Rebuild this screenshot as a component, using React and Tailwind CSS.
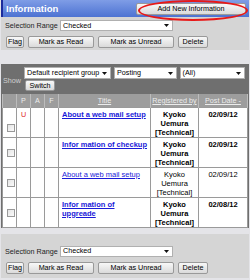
const Arrow = () => (
  <svg width="5" height="3" viewBox="0 0 5 3" className="shrink-0">
    <path d="M0 0h5L2.5 3z" fill="#111" />
  </svg>
);

function Select({ className, children }) {
  return (
    <div className={'flex items-center justify-between bg-white border border-[#b0b0b0] pl-[2px] pr-[3px] ' + className}>
      <span className="leading-none whitespace-nowrap">{children}</span>
      <Arrow />
    </div>
  );
}

function Btn({ className, children }) {
  return (
    <button className={'flex items-center justify-center border border-[#999] rounded-[2px] bg-linear-to-b from-[#f8f8f8] to-[#dadada] leading-none text-black whitespace-nowrap ' + className}>
      {children}
    </button>
  );
}

function ActionPanel({ className }) {
  return (
    <div className={'bg-[#d5d5d5] pl-[4px] ' + className}>
      <div className="flex items-center h-[11px]">
        <span className="w-[55px] shrink-0 text-[#222] whitespace-nowrap">Selection Range</span>
        <Select className="w-[113px] h-[11px]">Checked</Select>
      </div>
      <div className="flex gap-[4px] h-[12px] mt-[5px] pl-[1px]">
        <Btn className="w-[18px]">Flag</Btn>
        <Btn className="w-[66px]">Mark as Read</Btn>
        <Btn className="w-[76px]">Mark as Unread</Btn>
        <Btn className="w-[30px]">Delete</Btn>
      </div>
    </div>
  );
}

const rows = [
  { unread: true, title: 'About a web mail setup', bold: true, date: '02/09/12', boxTop: true },
  { title: 'Infor mation of checkup', bold: true, date: '02/09/12' },
  { title: 'About a web mail setup', bold: false, date: '02/09/12' },
  { title: 'Infor mation of upgreade', bold: true, date: '02/08/12' },
];

export default function App() {
  return (
    <div className="relative w-[250px] h-[280px] overflow-hidden bg-[#e4e4e8] px-[1px] font-['Liberation_Sans',Arial,sans-serif] text-[7.2px] leading-[9px]">
      {/* header */}
      <div className="flex items-center justify-between h-[17px] border-l-[2px] border-[#1c2c9c] bg-linear-to-b from-[#7f9de6] to-[#4d72d2]">
        <span className="pl-[3px] text-white font-bold text-[9.5px]">Information</span>
        <Btn className="w-[110px] h-[12px] mr-[3px]">Add New Information</Btn>
      </div>
      <div className="absolute left-[138px] top-0 w-[110px] h-[21px] rounded-[50%] border-[2px] border-[#e81818]" />

      <ActionPanel className="h-[33px] pt-[3px]" />

      {/* list */}
      <div className="mt-[14px] bg-[#6f6f6f]">
        <div className="flex items-center h-[30px]">
          <span className="w-[23px] pl-[2px] pt-[2px] text-[#cfcfcf]">Show</span>
          <div className="flex flex-col gap-[1px]">
            <div className="flex gap-[3px] h-[12px]">
              <Select className="w-[87px] h-[12px]">Default recipient group</Select>
              <Select className="w-[63px] h-[12px]">Posting</Select>
              <Select className="w-[65px] h-[12px] ml-[-0.5px]">(All)</Select>
            </div>
            <Btn className="w-[30px] h-[11px] ml-[1px]">Switch</Btn>
          </div>
        </div>
        <table className="table-fixed border-collapse w-[245px] ml-[1px]">
          <colgroup>
            <col className="w-[14px]" />
            <col className="w-[14px]" />
            <col className="w-[14px]" />
            <col className="w-[14px]" />
            <col className="w-[92px]" />
            <col className="w-[48px]" />
            <col className="w-[49px]" />
          </colgroup>
          <thead>
            <tr className="h-[13px] bg-[#9d9d9d] text-[#ececec] text-center">
              <th className="p-0 font-normal border-x border-[#bcbcbc]" />
              <th className="p-0 font-normal border-x border-[#bcbcbc]">P</th>
              <th className="p-0 font-normal border-x border-[#bcbcbc]">A</th>
              <th className="p-0 font-normal border-x border-[#bcbcbc]">F</th>
              <th className="p-0 font-normal border-x border-[#bcbcbc] underline">Title</th>
              <th className="p-0 font-normal border-x border-[#bcbcbc] underline whitespace-nowrap">Registered by</th>
              <th className="p-0 font-normal border-x border-[#bcbcbc] underline whitespace-nowrap">Post Date -</th>
            </tr>
          </thead>
          <tbody className="bg-white">
            {rows.map((r, i) => (
              <tr key={i} className="h-[30px]">
                <td className="p-0 border border-[#9a9a9a] align-middle">
                  <div className={'w-[8px] h-[8px] ml-[4px] border border-[#999] bg-linear-to-br from-[#e4e4e4] to-[#fafafa] ' + (r.boxTop ? 'mt-[12px]' : 'mt-[2px]')} />
                </td>
                <td className="p-0 border border-[#9a9a9a] align-top text-center pt-[2px] text-[#e02828]">{r.unread ? 'U' : ''}</td>
                <td className="p-0 border border-[#9a9a9a]" />
                <td className="p-0 border border-[#9a9a9a]" />
                <td className={'p-0 border border-[#9a9a9a] align-top pt-[2px] pl-[3px] pr-[2px] text-[7.5px] text-[#1a1ad8] underline ' + (r.bold ? 'font-bold' : '')}>
                  {r.title}
                </td>
                <td className={'p-0 border border-[#9a9a9a] align-top pt-[2px] text-center text-[7.5px] text-black ' + (r.bold ? 'font-bold' : '')}>
                  Kyoko<br />Uemura<br />[Technical]
                </td>
                <td className={'p-0 border border-[#9a9a9a] align-top pt-[2px] text-center text-[7.5px] text-black ' + (r.bold ? 'font-bold' : '')}>
                  {r.date}
                </td>
              </tr>
            ))}
          </tbody>
        </table>
      </div>

      <ActionPanel className="mt-[6px] h-[44px] pt-[12px]" />
    </div>
  );
}
